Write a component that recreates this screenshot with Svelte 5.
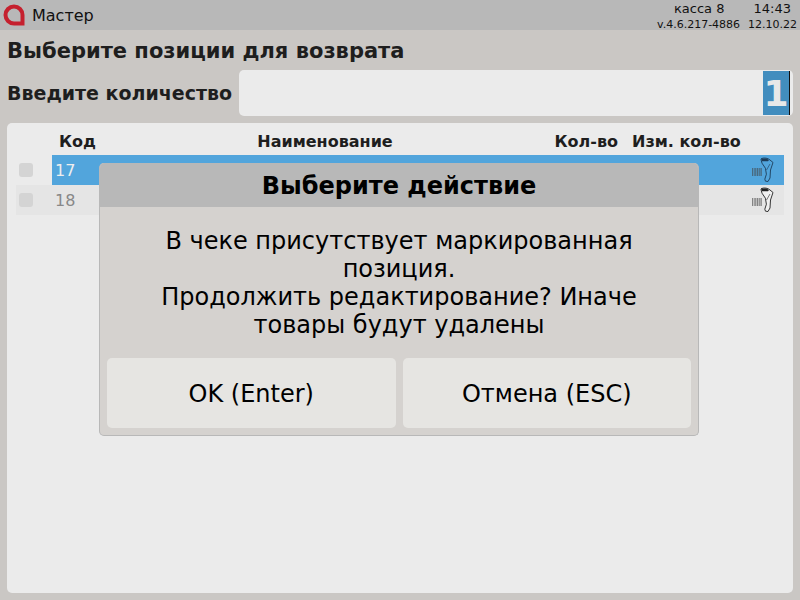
<script>
  let rows = [
    { code: "17", selected: true },
    { code: "18", selected: false }
  ];
</script>

<div class="screen">
  <header class="topbar">
    <svg class="logo" viewBox="0 0 22 22" width="22" height="22">
      <path d="M11 2.500a8.500 8.500 0 0 0 0 17h8.500v-8.500a8.500 8.500 0 0 0-8.500-8.500z" fill="none" stroke="#c5202e" stroke-width="4"/>
    </svg>
    <span class="app-name">Мастер</span>
    <div class="info">
      <div class="info-row"><span class="kassa">касса 8</span><span class="time">14:43</span></div>
      <div class="info-row small"><span>v.4.6.217-4886</span><span class="date">12.10.22</span></div>
    </div>
  </header>

  <main class="content">
    <h1>Выберите позиции для возврата</h1>
    <div class="qty">
      <label for="qty-input">Введите количество</label>
      <div class="qty-input" id="qty-input"><span class="selected-val">1</span><span class="caret"></span></div>
    </div>

    <section class="card">
      <div class="thead">
        <span class="c-check"></span>
        <span class="c-code">Код</span>
        <span class="c-name">Наименование</span>
        <span class="c-qty">Кол-во</span>
        <span class="c-change">Изм. кол-во</span>
      </div>
      {#each rows as row}
        <div class="row" class:selected={row.selected}>
          <span class="c-check"><i class="box"></i></span>
          <div class="row-main">
            <span class="code">{row.code}</span>
            <svg class="scanner" viewBox="0 0 24 28" width="24" height="28">
              <g fill="#444" opacity=".6">
                <rect x="2" y="12" width="1" height="8" />
                <rect x="3.700" y="12" width="1" height="8" />
                <rect x="5.200" y="12" width="1.200" height="8" />
                <rect x="7" y="12" width="1" height="8" />
                <rect x="8.600" y="12" width="1.200" height="8" />
                <rect x="10.400" y="12" width="1.400" height="8" />
              </g>
              <path class="body" d="M11.500 2.500c3-1 6.500-.4 8.500 1.500l3 2.500-2.500 7.500-.5 8-2 3.500-2.500-.3-.7-2 1.600-5-1-6-3.400-5-1-3.500z" stroke-width=".9"/>
              <path class="head" d="M11 2.500h5.500l2.500 1.500-1 1.200h-6z"/>
              <path class="body line" d="M20 8l-3.500 6" stroke-width=".6"/>
            </svg>
          </div>
        </div>
      {/each}
    </section>
  </main>

  <div class="dialog">
    <div class="dialog-title">Выберите действие</div>
    <div class="dialog-body">
      В чеке присутствует маркированная<br />позиция.<br />Продолжить редактирование? Иначе<br />товары будут удалены
    </div>
    <div class="dialog-buttons">
      <button>OK (Enter)</button>
      <button>Отмена (ESC)</button>
    </div>
  </div>
</div>

<style>
  :global(body) {
    margin: 0;
  }

  .screen {
    position: relative;
    display: flex;
    flex-direction: column;
    width: 800px;
    height: 600px;
    overflow: hidden;
    background: #cac7c4;
    color: #1e1e1e;
    font-family: "DejaVu Sans", sans-serif;
  }

  .topbar {
    display: flex;
    align-items: center;
    height: 30px;
    padding: 0 3px;
    box-sizing: border-box;
    background: #b8b8b8;
    flex-shrink: 0;
  }

  .app-name {
    margin-left: 7px;
    font-size: 16px;
    color: #111;
  }

  .info {
    margin-left: auto;
    width: 140px;
    padding-top: 3px;
    color: #111;
  }

  .info-row {
    display: flex;
    justify-content: space-between;
    font-size: 13px;
    line-height: 15px;
    padding-left: 17px;
    padding-right: 6px;
  }

  .info-row.small {
    font-size: 11px;
    line-height: 15px;
    padding-top: 1px;
    padding-left: 0;
    padding-right: 0;
  }

  .content {
    flex: 1;
    display: flex;
    flex-direction: column;
    padding: 0 7px 7px;
    min-height: 0;
  }

  h1 {
    margin: 8px 0 0;
    font-size: 21px;
    line-height: 26px;
    font-weight: 700;
  }

  .qty {
    display: flex;
    align-items: center;
    margin-top: 6px;
    height: 46px;
  }

  .qty label {
    font-size: 19px;
    font-weight: 700;
    width: 232px;
    white-space: nowrap;
  }

  .qty-input {
    flex: 1;
    display: flex;
    justify-content: flex-end;
    align-items: center;
    height: 46px;
    padding-right: 3px;
    box-sizing: border-box;
    background: #ebebeb;
    border-radius: 5px;
  }

  .selected-val {
    width: 26px;
    height: 44px;
    line-height: 46px;
    text-align: center;
    font-size: 36px;
    font-weight: 700;
    color: #e8e8e8;
    background: #428dbe;
  }

  .caret {
    width: 1px;
    height: 44px;
    background: #111;
  }

  .card {
    flex: 1;
    margin-top: 7px;
    padding: 0 9px;
    background: #ebebeb;
    border-radius: 5px;
  }

  .thead {
    display: flex;
    align-items: center;
    height: 32px;
    padding-top: 5px;
    box-sizing: border-box;
    font-size: 16px;
    font-weight: 700;
  }

  .c-check {
    display: flex;
    align-items: center;
    width: 36px;
    padding-left: 3px;
    box-sizing: border-box;
    flex-shrink: 0;
  }

  .thead .c-code {
    margin-left: 7px;
    width: 60px;
  }

  .thead .c-name {
    width: 412px;
    text-align: center;
  }

  .thead .c-qty {
    width: 87px;
    text-align: right;
  }

  .thead .c-change {
    margin-left: 14px;
    white-space: nowrap;
  }

  .row {
    display: flex;
    height: 30px;
    background: #e5e5e5;
  }

  .row.selected {
    background: none;
  }

  .row .c-check {
    height: 30px;
  }

  .box {
    display: block;
    width: 14px;
    height: 14px;
    border-radius: 3px;
    background: #d4d4d4;
  }

  .row-main {
    flex: 1;
    display: flex;
    align-items: center;
    justify-content: space-between;
    padding: 0 10px 0 3px;
    font-size: 16px;
    color: #888;
  }

  .selected .row-main {
    background: #52a5dc;
    color: #eee;
  }

  .scanner .body {
    fill: #f0f0f0;
    stroke: #222;
  }

  .scanner .body.line {
    fill: none;
  }

  .scanner .head {
    fill: #222;
  }

  .selected .scanner .body {
    fill: none;
    stroke: #1d3c58;
  }

  .selected .scanner .head {
    fill: #1d3c58;
  }

  .dialog {
    position: absolute;
    left: 99px;
    top: 163px;
    width: 600px;
    height: 273px;
    box-sizing: border-box;
    display: flex;
    flex-direction: column;
    background: #d5d2cf;
    border: 1px solid #b8b8b8;
    border-top: 0;
    border-radius: 5px;
    overflow: hidden;
    color: #000;
  }

  .dialog-title {
    height: 44px;
    line-height: 46px;
    text-align: center;
    font-size: 24px;
    font-weight: 700;
    background: #b8b8b8;
  }

  .dialog-body {
    margin-top: 20px;
    text-align: center;
    font-size: 24px;
    line-height: 28px;
  }

  .dialog-buttons {
    display: flex;
    gap: 7px;
    margin-top: auto;
    padding: 0 7px 7px;
  }

  button {
    flex: 1;
    height: 70px;
    padding-top: 2px;
    border: none;
    border-radius: 5px;
    background: #e6e5e2;
    color: #000;
    font-family: inherit;
    font-size: 24px;
  }
</style>
